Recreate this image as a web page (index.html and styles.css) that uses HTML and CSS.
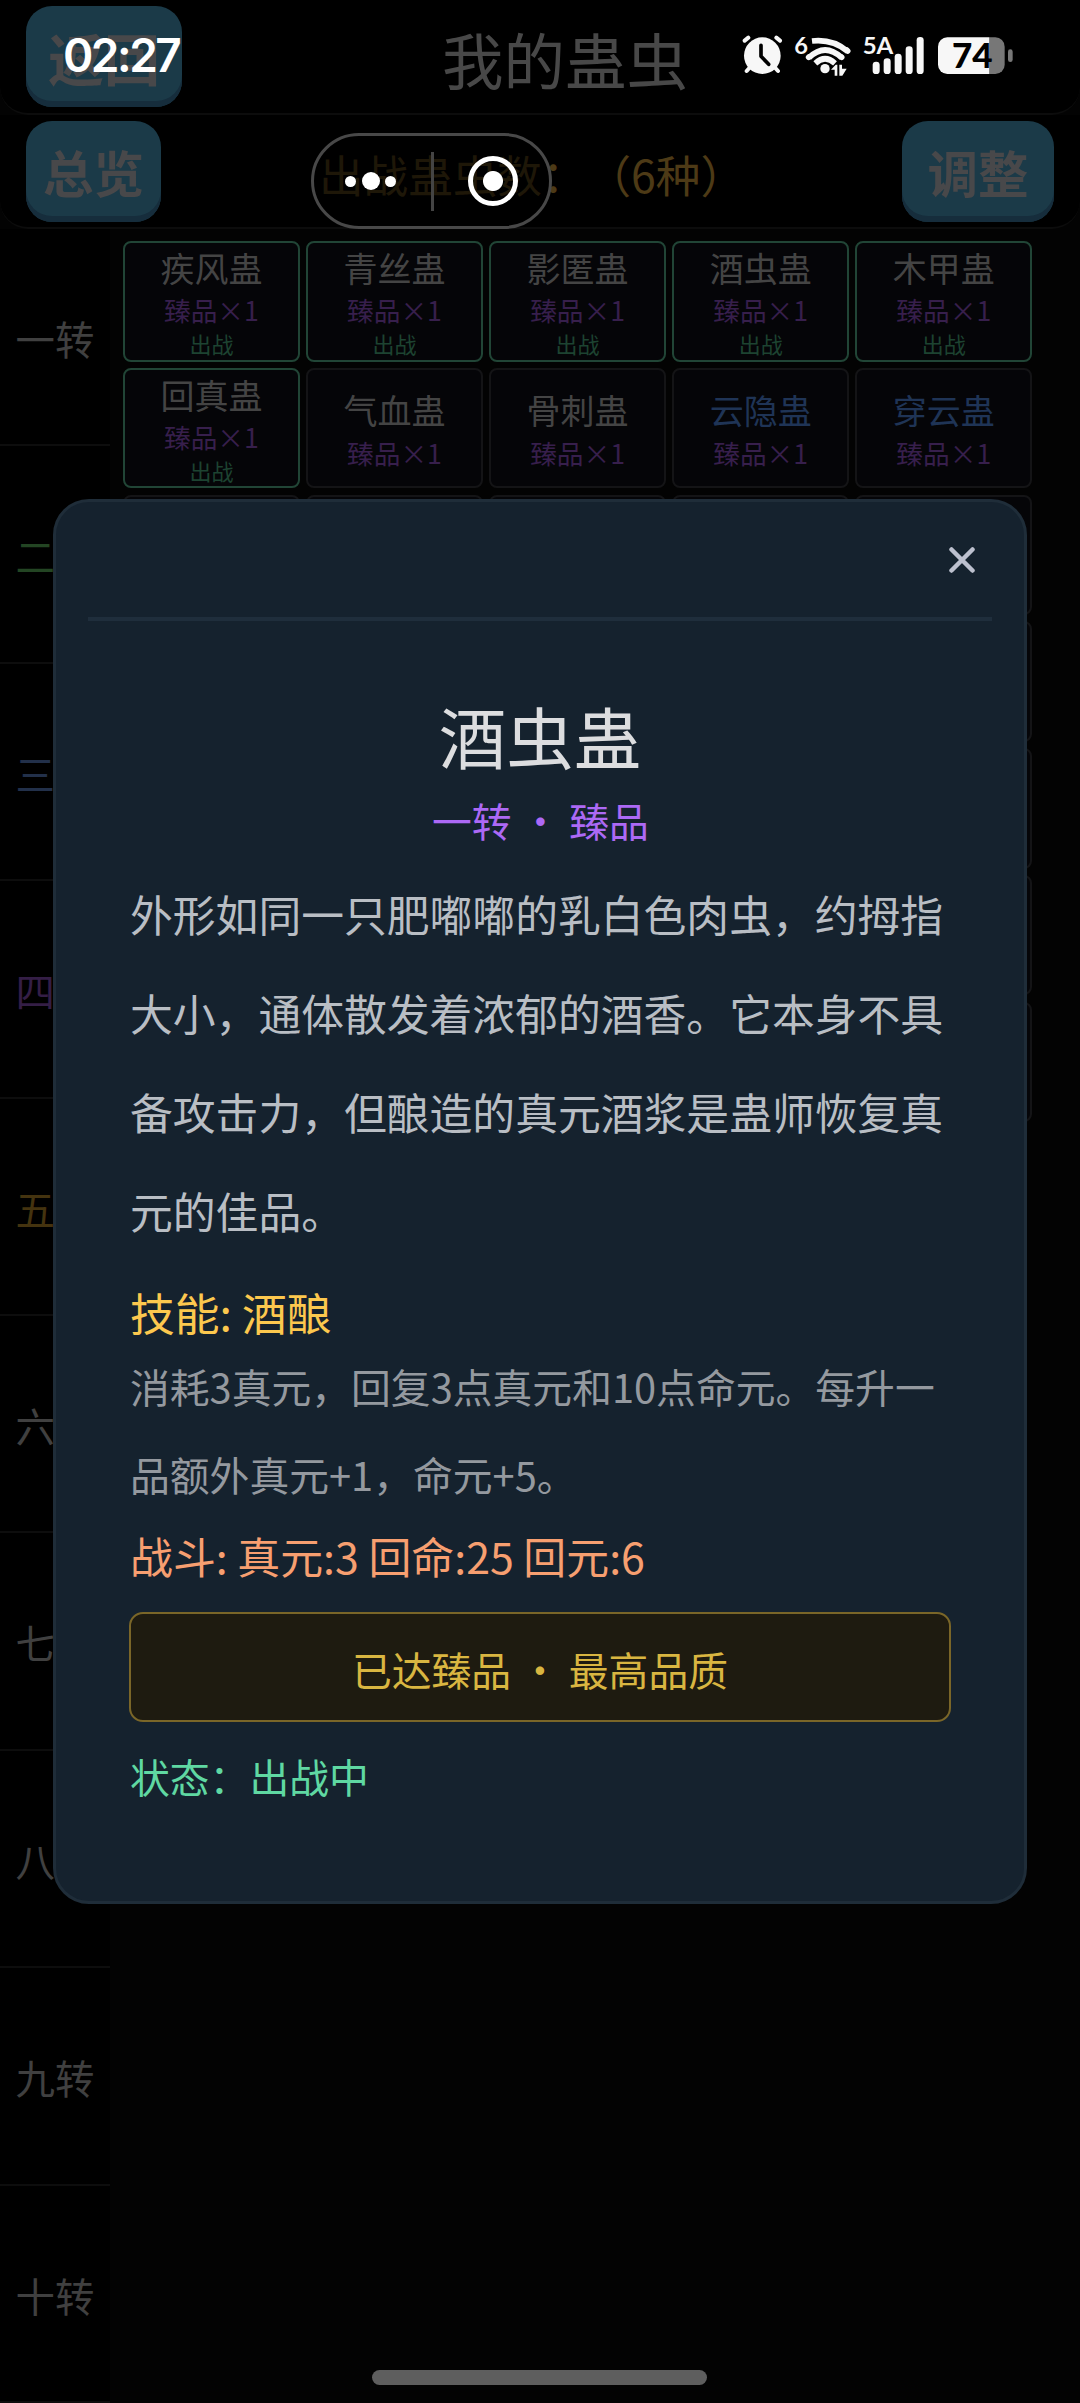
FILE: index.html
```html
<!DOCTYPE html>
<html lang="zh-CN">
<head>
<meta charset="utf-8">
<title>我的蛊虫</title>
<link rel="stylesheet" href="styles.css">
</head>
<body>
<div class="screen">
  <header class="bar bar-title">
    <button class="btn btn-back">返回</button>
    <h1 class="title">我的蛊虫</h1>
  </header>
  <div class="bar bar-tools">
    <button class="btn">总览</button>
    <div class="count">出战蛊虫数：（6种）</div>
    <button class="btn btn-adjust">调整</button>
  </div>
  <main class="content">
    <nav class="ranks">
      <div class="rank">一转</div>
      <div class="rank rank-green">二转</div>
      <div class="rank rank-blue">三转</div>
      <div class="rank rank-purple">四转</div>
      <div class="rank rank-gold">五转</div>
      <div class="rank">六转</div>
      <div class="rank">七转</div>
      <div class="rank">八转</div>
      <div class="rank">九转</div>
      <div class="rank">十转</div>
    </nav>
    <section class="cards">
      <div class="card active"><div class="name">疾风蛊</div><div class="grade">臻品×1</div><div class="state">出战</div></div>
      <div class="card active"><div class="name">青丝蛊</div><div class="grade">臻品×1</div><div class="state">出战</div></div>
      <div class="card active"><div class="name">影匿蛊</div><div class="grade">臻品×1</div><div class="state">出战</div></div>
      <div class="card active"><div class="name">酒虫蛊</div><div class="grade">臻品×1</div><div class="state">出战</div></div>
      <div class="card active"><div class="name">木甲蛊</div><div class="grade">臻品×1</div><div class="state">出战</div></div>
      <div class="card active"><div class="name">回真蛊</div><div class="grade">臻品×1</div><div class="state">出战</div></div>
      <div class="card"><div class="name">气血蛊</div><div class="grade">臻品×1</div></div>
      <div class="card"><div class="name">骨刺蛊</div><div class="grade">臻品×1</div></div>
      <div class="card rare"><div class="name">云隐蛊</div><div class="grade">臻品×1</div></div>
      <div class="card rare"><div class="name">穿云蛊</div><div class="grade">臻品×1</div></div>
      <div class="card"></div><div class="card"></div><div class="card"></div><div class="card"></div><div class="card"></div>
      <div class="card"></div><div class="card"></div><div class="card"></div><div class="card"></div><div class="card"></div>
      <div class="card"></div><div class="card"></div><div class="card"></div><div class="card"></div><div class="card"></div>
      <div class="card"></div><div class="card"></div><div class="card"></div><div class="card"></div><div class="card"></div>
      <div class="card"></div><div class="card"></div><div class="card"></div><div class="card"></div><div class="card"></div>
    </section>
  </main>

  <div class="modal">
    <div class="modal-head">
      <svg class="close" viewBox="0 0 26 26"><path d="M2.5 2.5 23.5 23.5M23.5 2.5 2.5 23.5"/></svg>
    </div>
    <div class="modal-body">
      <h2 class="gu-name">酒虫蛊</h2>
      <div class="gu-rank">一转 · 臻品</div>
      <p class="desc">外形如同一只肥嘟嘟的乳白色肉虫，约拇指<br>大小，通体散发着浓郁的酒香。它本身不具<br>备攻击力，但酿造的真元酒浆是蛊师恢复真<br>元的佳品。</p>
      <div class="skill">技能: 酒酿</div>
      <p class="skill-desc">消耗3真元，回复3点真元和10点命元。每升一<br>品额外真元+1，命元+5。</p>
      <div class="battle">战斗: 真元:3 回命:25 回元:6</div>
      <div class="maxed">已达臻品 · 最高品质</div>
      <div class="status">状态：出战中</div>
    </div>
  </div>

  <div class="clock">02:27</div>
  <svg class="sys-icons" viewBox="0 0 900 192">
    <g fill="none" stroke="#f7f7f7" stroke-width="12" stroke-linecap="round">
      <path d="M44 50 55 41M150 50 139 41M58 132 50 141M136 132 144 141"/>
    </g>
    <circle cx="97" cy="95" r="55" fill="#f7f7f7"/>
    <path d="M93 64V97L116 121" fill="none" stroke="#000" stroke-width="11" stroke-linecap="round" stroke-linejoin="round"/>
    <text class="sys-label" x="193" y="91" font-size="71">6</text>
    <g fill="none" stroke="#f7f7f7" stroke-width="17">
      <path d="M246 51Q308 44 353 82"/>
      <path d="M237 101Q285 55 335 101"/>
      <path d="M256 118Q285 91 315 118"/>
      <path d="M350 78 353 81M237 99 236 100M334 99 335 100" stroke-linecap="round"/>
    </g>
    <circle cx="285" cy="134" r="14" fill="#f7f7f7"/>
    <path d="M303 137 317 122H322V155H314V137ZM328 122H336V134H350L337 155H328Z" fill="#f7f7f7"/>
    <text class="sys-label" x="398" y="91" font-size="71" textLength="92" lengthAdjust="spacingAndGlyphs">5A</text>
    <g fill="#f7f7f7">
      <rect x="428" y="113" width="21" height="37" rx="10"/>
      <rect x="461" y="103" width="21" height="47" rx="10"/>
      <rect x="494" y="89" width="21" height="61" rx="10"/>
      <rect x="527" y="67" width="21" height="83" rx="10"/>
      <rect x="560" y="39" width="21" height="111" rx="10"/>
    </g>
    <path d="M778 40H796A28 28 0 0 1 824 68V122A28 28 0 0 1 796 150H778Z" fill="#777"/>
    <path d="M778 40H652A28 28 0 0 0 624 68V122A28 28 0 0 0 652 150H778Z" fill="#f7f7f7"/>
    <rect x="834" y="76" width="14" height="38" rx="7" fill="#777"/>
    <text class="sys-battery" x="666" y="131" font-size="101" textLength="122" lengthAdjust="spacingAndGlyphs">74</text>
  </svg>
  <div class="capsule">
    <i class="dot"></i><i class="dot dot-big"></i><i class="dot"></i>
    <i class="divider"></i>
    <i class="target"></i>
  </div>
  <div class="home-bar"></div>
</div>
</body>
</html>
```
FILE: styles.css
```css
* { box-sizing: border-box; margin: 0; padding: 0; }

body {
  background: #030303;
  font-family: "Noto Sans CJK SC", sans-serif;
  text-spacing-trim: space-all;
}

.screen {
  position: relative;
  width: 1080px;
  height: 2403px;
  overflow: hidden;
  display: flex;
  flex-direction: column;
}

/* top bars */
.bar {
  display: flex;
  align-items: flex-start;
  justify-content: space-between;
  height: 114px;
  padding: 6px 26px 0;
  background: #000;
  border-bottom: 2px solid #0c0c0c;
  border-radius: 0 0 28px 28px;
}
.bar-title { height: 115px; }
.bar-title .title { margin-right: 366px; }

.btn {
  width: 135px;
  height: 101px;
  border: 0;
  border-radius: 26px;
  background: #1b3a48;
  box-shadow: inset 0 -6px 0 #162d3c;
  color: #48484a;
  font: 700 50.5px/101px "Noto Sans CJK SC", sans-serif;
}
.btn-back { width: 156px; font-size: 56px; }
.btn-adjust { width: 152px; }

.title {
  color: #484848;
  font-size: 61.5px;
  font-weight: 400;
  line-height: 106px;
}
.count {
  margin-left: 1px;
  color: #4d3a16;
  font-size: 44.6px;
  line-height: 105px;
}

/* rank column and card grid */
.content { display: flex; flex: 1; }

.ranks {
  display: flex;
  flex-direction: column;
  width: 110px;
  background: #000;
}
.rank {
  flex: none;
  height: 217.4px;
  border-bottom: 2px solid #0d0d0d;
  color: #404040;
  font-size: 39.4px;
  line-height: 217px;
  text-align: center;
}
.rank-green { color: #234523; }
.rank-blue { color: #22304a; }
.rank-purple { color: #341e46; }
.rank-gold { color: #44330f; }

.cards {
  display: grid;
  grid-template-columns: repeat(5, 177px);
  grid-auto-rows: 120.5px;
  gap: 6.3px 6.1px;
  align-content: start;
  padding: 12px 0 0 12.9px;
}
.card {
  display: flex;
  flex-direction: column;
  align-items: center;
  justify-content: center;
  border: 2px solid #141416;
  border-radius: 8px;
  background: #050508;
}
.card.active { border-color: #214536; }
.name { color: #444; font-size: 34px; line-height: 49px; }
.rare .name { color: #1f3456; }
.grade { color: #371f4c; font-size: 26.7px; line-height: 37px; }
.state { color: #1d4331; font-size: 22px; line-height: 31px; }
.active .grade { line-height: 36px; }

/* detail dialog */
.modal {
  position: absolute;
  left: 53px;
  top: 499px;
  width: 974px;
  height: 1405px;
  padding: 0 32px;
  border: 3px solid #1f2d39;
  border-radius: 36px;
  background: #15222e;
}
.modal-head {
  display: flex;
  justify-content: flex-end;
  height: 119px;
  padding: 45px 17px 0 0;
  border-bottom: 4px solid #1f2e3c;
}
.close {
  width: 26px;
  height: 26px;
  fill: none;
  stroke: #bcc0ce;
  stroke-width: 4.5;
  stroke-linecap: round;
}
.modal-body {
  display: flex;
  flex-direction: column;
  padding: 65px 41px 0;
}
.gu-name {
  color: #dcdddf;
  font-size: 67.5px;
  font-weight: 400;
  line-height: 98px;
  text-align: center;
}
.gu-rank {
  margin-top: 3px;
  padding-left: 1px;
  color: #ac69f5;
  font-size: 39.8px;
  line-height: 66px;
  text-align: center;
}
.desc {
  padding-left: 1px;
  margin-top: 11px;
  color: #b9bec4;
  font-size: 42.8px;
  line-height: 99.1px;
  white-space: nowrap;
}
.skill {
  padding-left: 1px;
  margin-top: 19.6px;
  color: #fcc84e;
  font-size: 44.8px;
  line-height: 64px;
}
.skill-desc {
  padding-left: 1px;
  margin-top: -2px;
  color: #94999f;
  font-size: 39.8px;
  line-height: 88px;
  white-space: nowrap;
}
.battle {
  padding-left: 1px;
  margin-top: 6px;
  color: #f79f70;
  font-size: 42.9px;
  line-height: 62px;
}
.maxed {
  height: 110px;
  margin-top: 26px;
  border: 2px solid #7a6628;
  border-radius: 14px;
  background: #1e1b10;
  color: #d9b641;
  font-size: 39.8px;
  line-height: 109px;
  text-align: center;
}
.status {
  padding-left: 1px;
  margin-top: 25px;
  color: #5fd8a2;
  font-size: 39.8px;
  line-height: 58px;
}

/* system overlays */
.clock {
  position: absolute;
  left: 63px;
  top: 26px;
  color: #fff;
  font: 600 46px/58px Inter, sans-serif;
  letter-spacing: -2.5px;
}
.sys-icons {
  position: absolute;
  left: 730px;
  top: 24px;
  width: 300px;
  height: 64px;
}
.sys-label { font-family: Lato, sans-serif; font-weight: 700; fill: #f7f7f7; }
.sys-battery { font-family: Lato, sans-serif; font-weight: 900; fill: #000; }

.capsule {
  position: absolute;
  left: 311px;
  top: 133px;
  width: 241px;
  height: 96px;
  display: flex;
  align-items: center;
  padding-left: 31px;
  border: 3px solid #484848;
  border-radius: 48px;
  background: rgba(0, 0, 0, .6);
}
.capsule i { flex: none; }
.dot { width: 11px; height: 11px; border-radius: 50%; background: #fff; }
.dot-big { width: 18px; height: 18px; margin: 0 5.5px; }
.divider { width: 3px; height: 59px; margin: 0 34px 0 35px; background: #444; }
.target {
  width: 50px;
  height: 50px;
  border: 5px solid #fff;
  border-radius: 50%;
  background: radial-gradient(circle, #fff 9.5px, transparent 10.5px);
}
.home-bar {
  position: absolute;
  left: 372px;
  top: 2370px;
  width: 335px;
  height: 15px;
  border-radius: 8px;
  background: #5e5e5e;
}
```
